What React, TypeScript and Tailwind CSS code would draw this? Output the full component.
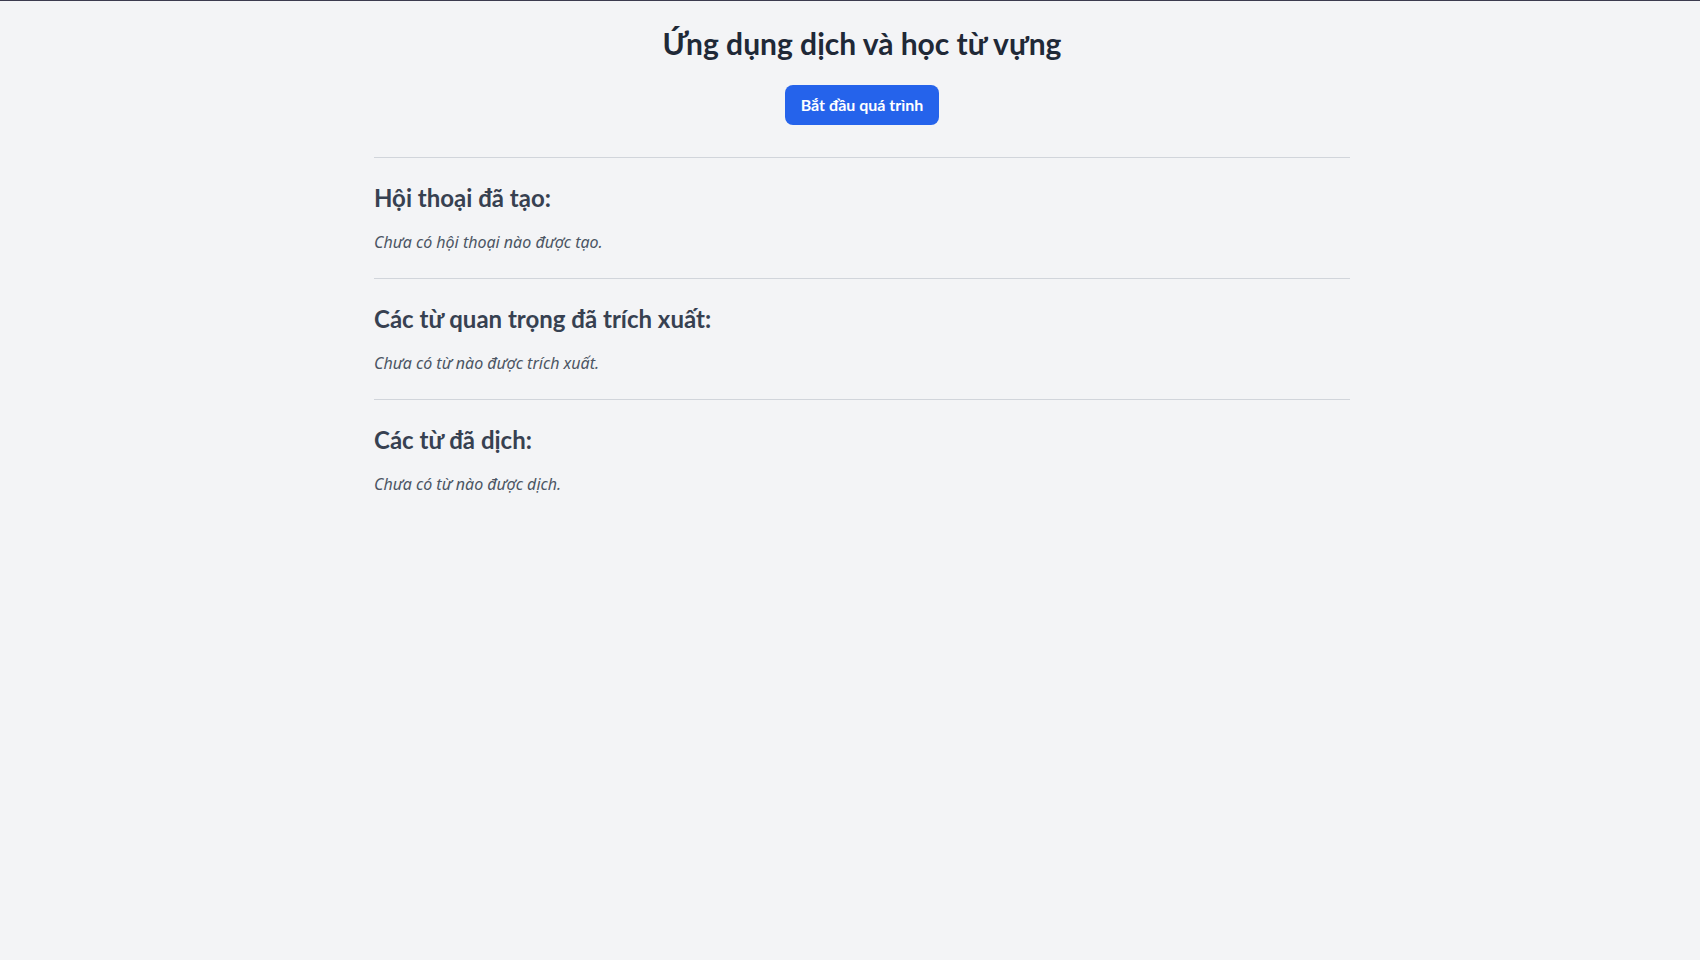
import React, { useState } from 'react';

interface Section {
  title: string;
  empty: string;
}

const SECTIONS: Section[] = [
  { title: 'Hội thoại đã tạo:', empty: 'Chưa có hội thoại nào được tạo.' },
  { title: 'Các từ quan trọng đã trích xuất:', empty: 'Chưa có từ nào được trích xuất.' },
  { title: 'Các từ đã dịch:', empty: 'Chưa có từ nào được dịch.' },
];

const HEAD_FONT = { fontFamily: 'Lato, "Noto Sans", sans-serif' };

const App: React.FC = () => {
  const [running, setRunning] = useState(false);

  return (
    <div
      className="min-h-screen bg-[#f3f4f6] border-t border-[#3b3b4f] pl-6"
      style={{ fontFamily: '"Noto Sans", "Open Sans", sans-serif' }}
    >
      <div className="max-w-5xl mx-auto px-6 pt-6 pb-10">
        {/* Tiêu đề */}
        <h1 className="text-3xl font-bold text-[#1f2937] text-center mb-6" style={HEAD_FONT}>
          Ứng dụng dịch và học từ vựng
        </h1>

        <div className="flex justify-center">
          <button
            onClick={() => setRunning(!running)}
            className="bg-[#2563eb] hover:bg-[#1d4ed8] text-white font-bold px-4 py-2 rounded-lg"
            style={HEAD_FONT}
          >
            Bắt đầu quá trình
          </button>
        </div>

        {/* Kết quả */}
        {SECTIONS.map((s, i) => (
          <div key={i} className={`border-t border-[#d1d5db] pt-6 ${i === 0 ? 'mt-8' : 'mt-6'}`}>
            <h2 className="text-2xl font-bold text-[#374151] mb-4" style={HEAD_FONT}>
              {s.title}
            </h2>
            <p className="italic text-[#4b5563]">{s.empty}</p>
          </div>
        ))}
      </div>
    </div>
  );
};

export default App;
